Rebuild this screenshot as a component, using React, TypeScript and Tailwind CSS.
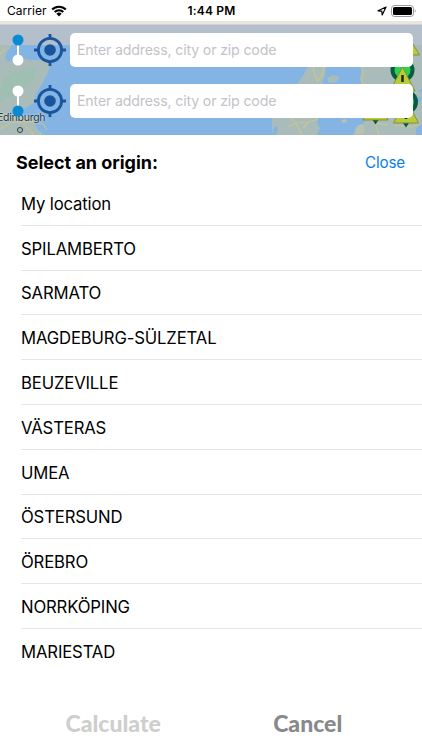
const origins = [
  "My location",
  "SPILAMBERTO",
  "SARMATO",
  "MAGDEBURG-SÜLZETAL",
  "BEUZEVILLE",
  "VÄSTERAS",
  "UMEA",
  "ÖSTERSUND",
  "ÖREBRO",
  "NORRKÖPING",
  "MARIESTAD",
]

function StatusBar() {
  return (
    <div className="grid grid-cols-3 items-center h-[21px] pl-[7px] pr-[6px] text-black">
      <div className="flex items-center gap-[4px]">
        <span className="text-[12px] leading-[21px] tracking-[0.05px]">Carrier</span>
        <svg viewBox="0 0 16 12" className="w-4 h-3">
          <path d="M8 11.4 5.4 8.8a3.6 3.6 0 0 1 5.2 0Z" />
          <path d="M3.7 7.1a6 6 0 0 1 8.6 0M1.2 4.5a9.6 9.6 0 0 1 13.6 0" fill="none" stroke="black" strokeWidth="2.1" />
        </svg>
      </div>
      <div className="text-center text-[12px] leading-[21px] font-semibold tracking-[0.2px]">1:44 PM</div>
      <div className="flex items-center justify-end gap-[4px]">
        <svg viewBox="0 0 10 10" className="w-[10px] h-[10px]">
          <path d="M9 1 1 4.8 4.8 5.2 5.2 9Z" fill="none" stroke="black" strokeWidth="1.2" strokeLinejoin="round" />
        </svg>
        <svg viewBox="0 0 25 12" className="w-[25px] h-3">
          <rect x="0.5" y="0.5" width="22" height="11" rx="3" fill="none" stroke="#999" />
          <rect x="2" y="2" width="19" height="8" rx="1.6" />
          <path d="M23.7 4.2c1.3.7 1.3 2.9 0 3.6Z" fill="#999" />
        </svg>
      </div>
    </div>
  )
}

function MapPin({ x, y }: { x: number; y: number }) {
  return (
    <g transform={`translate(${x} ${y})`}>
      <path d="M-3 12h6l-3 4.5Z" fill="#075b3e" />
      <circle cy="-9" r="12" fill="#075b3e" />
      <circle cy="-9" r="8" fill="#2bd34c" />
      <path d="M0-12 12.5 12h-25Z" fill="#b9cb35" stroke="#79843c" strokeWidth="0.8" strokeLinejoin="round" />
      <path d="M0-4v7M0 5.2v2.8" stroke="#252c18" strokeWidth="2.6" />
    </g>
  )
}

function MapBackground() {
  return (
    <svg viewBox="0 0 422 114" className="absolute inset-0 w-full h-[114px]">
      <rect width="422" height="114" fill="#83b4e3" />
      {/* Scottish coast */}
      <path d="M0 24h12l-5 7-2 6 3 4 6-2 10-1 10 1h15l3 3-4 9-3 6-4 8-5 8-2 9-12 7-9 1-6 4 12 2 10-1 5 5 4 9 4 3 2 6H0Z" fill="#a9bcb9" />
      <path d="M0 67l5-10 8-6 8 0 7-5 8 2-1 9-7 8-10 5-5 6-6 1-7 4Z" fill="#9fbfb2" />
      <path d="M0 34l5-6M0 108l12-7 11 1 8-2 12 3 4 6M24 103l10 11" fill="none" stroke="#c9c28a" strokeWidth="1.2" />
      {/* Denmark and northern Germany */}
      <path d="M290 66l8-4 5-7 4-8 3-2h16l-1 10-3 8-1 6h-31Z" fill="#a9bcb9" />
      <path d="M327 57l6-3 6 2-2 5-8 1Z" fill="#a9bcb9" />
      <path d="M272 114V96h47l-2 6 3 5-3 7Z" fill="#a9bcb9" />
      <path d="M274 106l3-1 1 4-2 5h-4Z" fill="#83b4e3" />
      <path d="M313 46l2 8 3 6M324 46l-2 8-5 7M290 97l6 5 13-1 9-3M296 102l6 12M288 106l8-4M309 101l-6 6" fill="none" stroke="#c9c58e" strokeWidth="1.2" />
      <path d="M361 24h61v90h-69l3-8 6-2 4-6-4-11 1-20-3-10 2-9Z" fill="#a9bcb9" />
      <path d="M355 113l2-8 5-2 3 5-2 5ZM341 99l5-1 1 3-4 1Z" fill="#b6c3b2" />
      <path d="M361 46l3 7-3 5 3 9M368 98l7 4 4 12M375 102l13 2M393 104l19 2 8-4" fill="none" stroke="#c9c58e" strokeWidth="1.2" />
      <path d="M418 70l4-3v5ZM417 77l3-2 2 5-4 1ZM416 108l3-3 3-2v11h-6Z" fill="#83b4e3" />
      <MapPin x={402.5} y={58} />
      <MapPin x={406} y={90} />
      <MapPin x={375.5} y={87} />
      <rect y="3" width="422" height="21" fill="#b3bfca" />
      <path d="M413 23l6.5 11h-13Z" fill="#b9cb35" stroke="#79843c" strokeWidth="0.8" />
      <rect width="422" height="3.5" fill="#e9e6df" />
    </svg>
  )
}

function RouteDots({ destination = false }: { destination?: boolean }) {
  return (
    <svg viewBox="0 0 12 32" className="w-3 h-8">
      <path d="M6 6v20" stroke="white" strokeWidth="2" />
      <circle cx="6" cy="6" r="5.5" fill={destination ? "white" : "#098bd2"} />
      <circle cx="6" cy="26" r="5.5" fill={destination ? "#098bd2" : "white"} />
    </svg>
  )
}

function AddressRow({ destination = false }: { destination?: boolean }) {
  return (
    <div className="flex items-center h-[34px] pl-[11.5px] pr-[9px]">
      <RouteDots destination={destination} />
      <svg viewBox="0 0 32 32" className="w-8 h-8 ml-[10.5px] mr-1" fill="none" stroke="#18559c" strokeWidth="2.8">
        <circle cx="16" cy="16" r="11.6" />
        <circle cx="16" cy="16" r="5.8" fill="#18559c" stroke="none" />
        <path d="M16 0v5M16 27v5M0 16h5M27 16h5" />
      </svg>
      <input
        aria-label={destination ? "Destination" : "Origin"}
        placeholder="Enter address, city or zip code"
        className="min-w-0 flex-1 h-[34px] px-[7px] pb-[1px] rounded-[5px] bg-white text-[14.2px] tracking-[-0.17px] placeholder:text-[#c3c3c7]"
      />
    </div>
  )
}

export default function App() {
  return (
    <main className="w-[422px] h-[750px] overflow-hidden bg-white text-black font-[Inter,'Liberation_Sans',sans-serif]">
      <StatusBar />
      <section className="relative h-[114px] overflow-hidden">
        <MapBackground />
        <span className="absolute left-[-3px] top-[89px] text-[10.5px] tracking-[-0.25px] leading-4 text-[#2c3438] [text-shadow:0_0_2px_white]">
          Edinburgh
        </span>
        <span className="absolute left-[17px] top-[106px] w-[6px] h-[6px] rounded-full border border-[#343d42]" />
        <div className="relative flex flex-col gap-[17px] pt-3">
          <AddressRow />
          <AddressRow destination />
        </div>
      </section>
      <section className="h-[539px]">
        <div className="flex items-center justify-between h-[46px] pt-[9px] pl-4 pr-[17px]">
          <h1 className="text-[18px] font-bold tracking-[-0.02px]">Select an origin:</h1>
          <button className="pt-[2px] text-[15.2px] tracking-[-0.15px] text-[#087eea]">Close</button>
        </div>
        <ul className="pl-[21px]">
          {origins.map((origin) => (
            <li
              key={origin}
              className="flex items-center h-[44.8px] pt-[3px] border-b border-[#e5e5e7] last:border-0 text-[16.7px] tracking-[-0.15px]"
            >
              {origin}
            </li>
          ))}
        </ul>
      </section>
      <footer className="grid grid-cols-2 pl-[16px] pr-[17px] pt-[33px] font-[Lato,sans-serif] text-[23px] leading-[32px] font-black">
        <button disabled className="text-[#cecece]">Calculate</button>
        <button className="text-[#88898c]">Cancel</button>
      </footer>
    </main>
  )
}
